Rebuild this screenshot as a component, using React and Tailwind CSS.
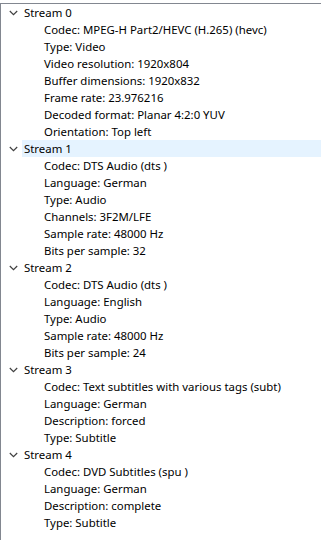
import React from "react";

const streams = [
  {
    name: "Stream 0",
    props: [
      "Codec: MPEG-H Part2/HEVC (H.265) (hevc)",
      "Type: Video",
      "Video resolution: 1920x804",
      "Buffer dimensions: 1920x832",
      "Frame rate: 23.976216",
      "Decoded format: Planar 4:2:0 YUV",
      "Orientation: Top left",
    ],
  },
  {
    name: "Stream 1",
    hover: true,
    props: [
      "Codec: DTS Audio (dts )",
      "Language: German",
      "Type: Audio",
      "Channels: 3F2M/LFE",
      "Sample rate: 48000 Hz",
      "Bits per sample: 32",
    ],
  },
  {
    name: "Stream 2",
    props: [
      "Codec: DTS Audio (dts )",
      "Language: English",
      "Type: Audio",
      "Sample rate: 48000 Hz",
      "Bits per sample: 24",
    ],
  },
  {
    name: "Stream 3",
    props: [
      "Codec: Text subtitles with various tags (subt)",
      "Language: German",
      "Description: forced",
      "Type: Subtitle",
    ],
  },
  {
    name: "Stream 4",
    props: [
      "Codec: DVD Subtitles (spu )",
      "Language: German",
      "Description: complete",
      "Type: Subtitle",
    ],
  },
];

function Chevron() {
  return (
    <svg width="9" height="6" viewBox="0 0 9 6" className="shrink-0">
      <path d="M0.8 1 L4.5 4.6 L8.2 1" fill="none" stroke="#404040" strokeWidth="1.2" />
    </svg>
  );
}

export default function App() {
  return (
    <div className="w-[321px] h-[540px] bg-white overflow-hidden pt-[3px]">
      <div
        className="h-full border-t border-l border-[#828790] text-[11.4px] text-black"
        style={{ fontFamily: '"Noto Sans", "Liberation Sans", sans-serif' }}
      >
        {streams.map((s) => (
          <div key={s.name}>
            <div className="flex items-center h-[17px]">
              <div className="w-[21px] flex justify-center pl-[3px]">
                <Chevron />
              </div>
              <div
                className={`flex-1 h-full flex items-center pl-[2px] ${
                  s.hover ? "bg-[#e5f3ff]" : ""
                }`}
              >
                {s.name}
              </div>
            </div>
            {s.props.map((p) => (
              <div key={p} className="h-[17px] flex items-center pl-[43px] whitespace-nowrap">
                {p}
              </div>
            ))}
          </div>
        ))}
      </div>
    </div>
  );
}
